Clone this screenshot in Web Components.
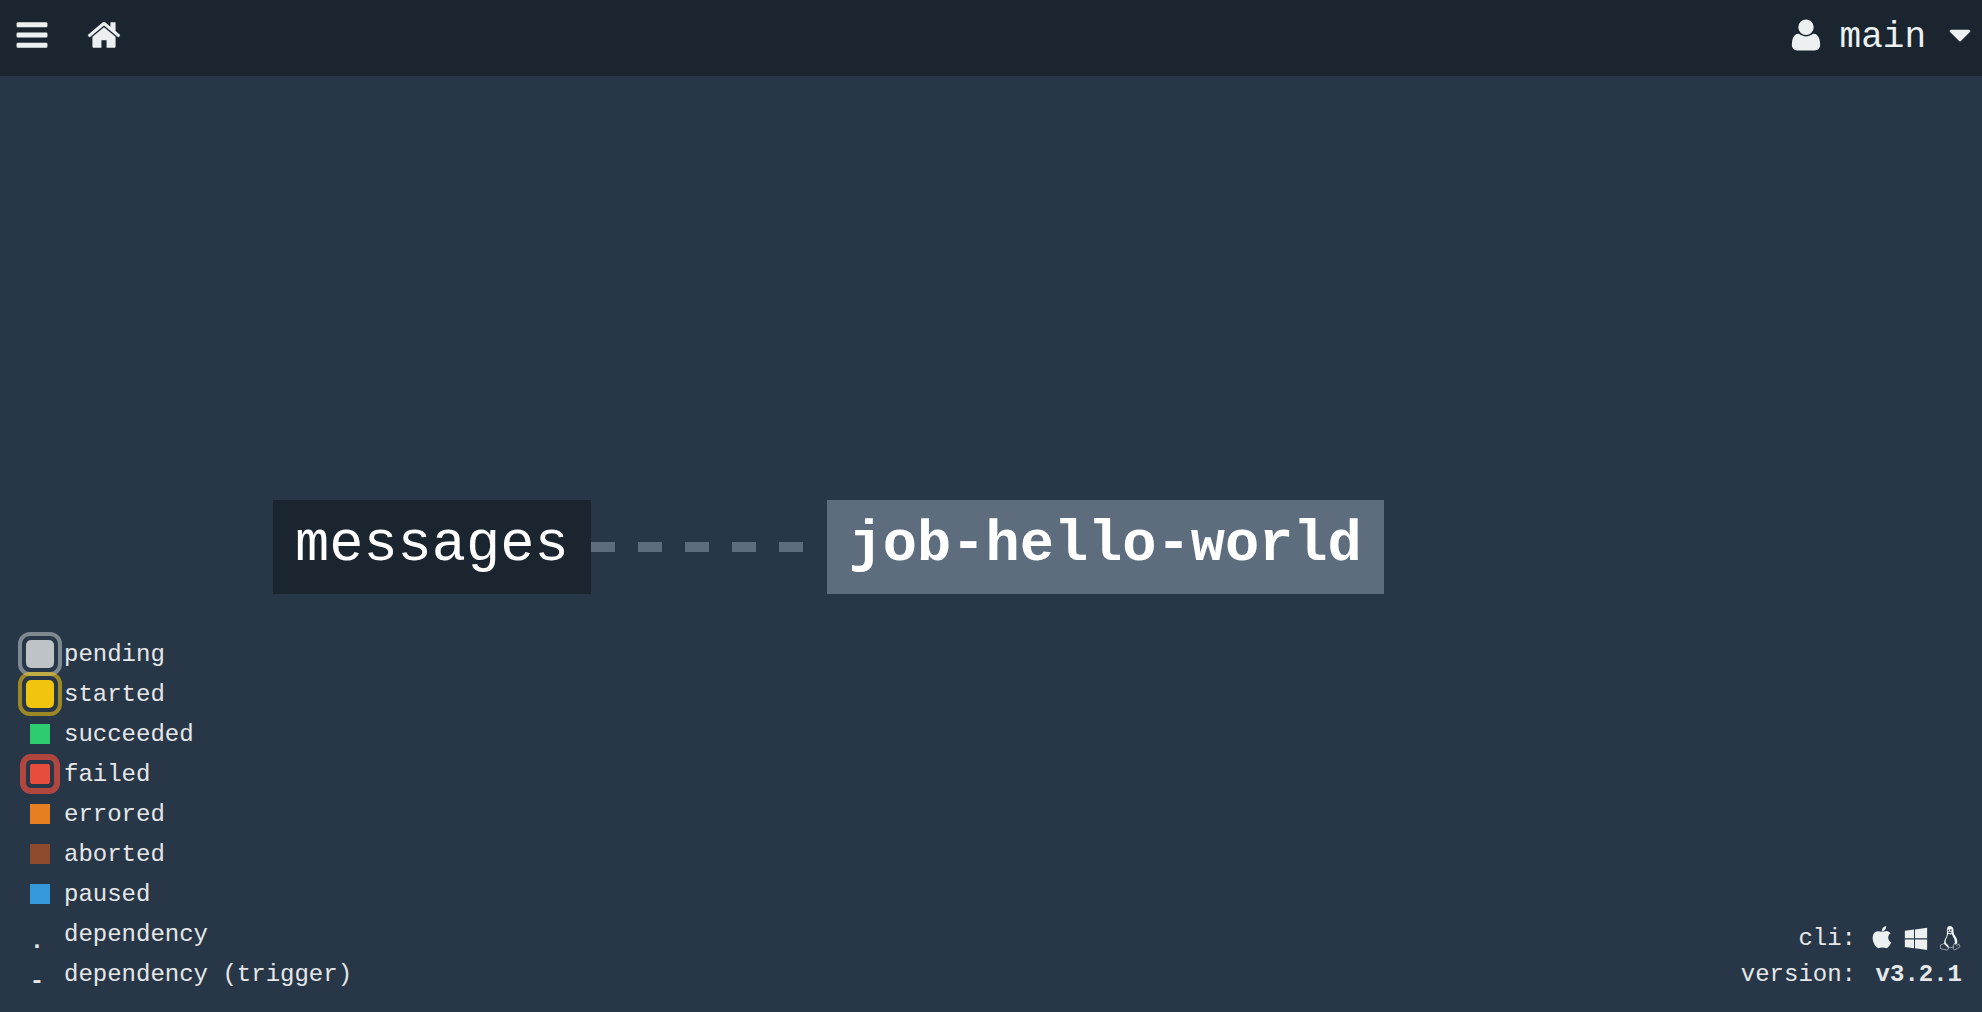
<!DOCTYPE html>
<html lang="en">
<head>
<meta charset="utf-8">
<meta name="viewport" content="width=device-width, initial-scale=1">
<title>Pipeline</title>
<style>
  body { margin: 0; background: #273747; color: #ecf0f1; font: 24px/40px "Liberation Mono", "Courier New", monospace; }
</style>
</head>
<body>
<pipeline-page></pipeline-page>
<script>
const ICONS = {
  bars: '<path d="M1664 1344v128q0 26-19 45t-45 19h-1408q-26 0-45-19t-19-45v-128q0-26 19-45t45-19h1408q26 0 45 19t19 45zm0-512v128q0 26-19 45t-45 19h-1408q-26 0-45-19t-19-45v-128q0-26 19-45t45-19h1408q26 0 45 19t19 45zm0-512v128q0 26-19 45t-45 19h-1408q-26 0-45-19t-19-45v-128q0-26 19-45t45-19h1408q26 0 45 19t19 45z"/>',
  home: '<path d="M1472 992v480q0 26-19 45t-45 19h-384v-384h-256v384h-384q-26 0-45-19t-19-45v-480q0-1 .5-3t.5-3l575-474 575 474q1 2 1 6zm223-69l-62 74q-8 9-21 11h-3q-13 0-21-7l-692-577-692 577q-12 8-24 7-13-2-21-11l-62-74q-8-10-7-23.5t11-21.5l719-599q32-26 76-26t76 26l244 204v-195q0-14 9-23t23-9h192q14 0 23 9t9 23v408l219 182q10 8 11 21.5t-7 23.5z"/>',
  user: '<path d="M1600 1405q0 120-73 189.5t-194 69.5h-874q-121 0-194-69.5t-73-189.5q0-53 3.5-103.5t14-109 26.5-108.5 43-97.5 62-81 85.5-53.5 111.5-20q9 0 42 21.5t74.5 48 108 48 133.5 21.5 133.5-21.5 108-48 74.5-48 42-21.5q61 0 111.5 20t85.5 53.5 62 81 43 97.5 26.5 108.5 14 109 3.5 103.5zm-320-893q0 159-112.5 271.5t-271.5 112.5-271.5-112.5-112.5-271.5 112.5-271.5 271.5-112.5 271.5 112.5 112.5 271.5z"/>',
  caret: '<path d="M1408 704q0 26-19 45l-448 448q-19 19-45 19t-45-19l-448-448q-19-19-19-45t19-45 45-19h896q26 0 45 19t19 45z"/>',
  apple: '<path d="M1585 1215q-39 125-123 250-129 196-257 196-49 0-140-32-86-32-151-32-61 0-142 33-81 34-132 34-152 0-301-259-147-261-147-503 0-228 113-374 113-144 284-144 72 0 177 30 104 30 138 30 45 0 143-34 102-34 173-34 119 0 213 65 52 36 104 100-79 67-114 118-65 94-65 207 0 124 69 223t158 126zm-376-1173q0 61-29 136-30 75-93 138-54 54-108 72-37 11-104 17 3-149 78-257 74-107 250-148 1 3 2.5 11t2.5 11q0 4 .5 10t.5 10z"/>',
  windows: '<path d="M746 1006v651l-682-94v-557h682zm0-743v659h-682v-565zm982 743v786l-907-125v-661h907zm0-878v794h-907v-669z"/>',
  linux: '<path fill-rule="evenodd" d="M880 0C1060 0 1160 130 1160 330C1160 540 1200 620 1300 770C1420 950 1490 1160 1420 1330L1250 1350C1290 1180 1240 980 1120 800L1030 590L930 640L760 580C740 760 620 900 580 1080C550 1200 590 1270 660 1350L790 1480C830 1540 800 1580 740 1590L470 1370C440 1240 460 1080 540 940C640 780 680 660 665 420C650 160 700 0 880 0ZM770 260a45 70 0 1 0 2 0ZM960 250a55 75 0 1 0 2 0ZM720 500L880 540L1050 480L860 430Z"/><path fill="none" stroke="currentColor" stroke-width="55" opacity=".8" d="M740 1590C850 1650 1020 1630 1160 1540M420 1310C360 1390 220 1380 185 1430C160 1500 210 1600 180 1670C260 1750 470 1720 610 1790C750 1810 810 1700 740 1590L530 1330C490 1270 440 1260 420 1310ZM1190 1330C1140 1500 1110 1650 1170 1750C1270 1840 1360 1690 1610 1580C1680 1530 1570 1480 1550 1330C1480 1470 1300 1480 1250 1300Z"/>'
};

class UiIcon extends HTMLElement {
  connectedCallback() {
    this.attachShadow({ mode: "open" }).innerHTML = `
      <style>
        :host { display: block; width: var(--icon-size, 36px); height: var(--icon-size, 36px); }
        svg { display: block; width: 100%; height: 100%; fill: currentColor; overflow: visible; }
      </style>
      <svg viewBox="0 0 1792 1792" aria-hidden="true">${ICONS[this.getAttribute("name")]}</svg>`;
  }
}
customElements.define("ui-icon", UiIcon);

class TopBar extends HTMLElement {
  connectedCallback() {
    this.attachShadow({ mode: "open" }).innerHTML = `
      <style>
        :host { display: flex; justify-content: space-between; height: 76px; background: #1b252f; padding: 0 4px 0 14px; box-sizing: border-box; }
        nav, .user { display: flex; align-items: center; }
        nav { gap: 36px; padding-bottom: 6px; }
        button, a { display: block; margin: 0; padding: 0; border: 0; background: none; color: inherit; font: inherit; cursor: pointer; }
        .user { gap: 16px; font-size: 36px; line-height: 40px; }
        ui-icon { margin-bottom: 6px; }
        nav ui-icon { margin: 0; }
      </style>
      <nav aria-label="Main">
        <button type="button" aria-label="Toggle menu"><ui-icon name="bars"></ui-icon></button>
        <a href="#home" aria-label="Home"><ui-icon name="home"></ui-icon></a>
      </nav>
      <button type="button" class="user">
        <ui-icon name="user"></ui-icon><slot></slot><ui-icon name="caret"></ui-icon>
      </button>`;
  }
}
customElements.define("top-bar", TopBar);

class GraphNode extends HTMLElement {
  connectedCallback() {
    this.attachShadow({ mode: "open" }).innerHTML = `
      <style>
        :host { display: block; background: #1b252f; color: #fff; }
        :host([kind="job"]) { background: #5d6d7e; font-weight: bold; }
        a { display: block; padding: 13px 22px 17px; color: inherit; text-decoration: none; font-size: 57px; line-height: 64px; white-space: nowrap; }
      </style>
      <a href="#${this.getAttribute("kind")}"><slot></slot></a>`;
  }
}
customElements.define("graph-node", GraphNode);

class GraphEdge extends HTMLElement {
  connectedCallback() {
    this.attachShadow({ mode: "open" }).innerHTML = `
      <style>
        :host { display: block; width: 236px; }
        svg { display: block; width: 100%; height: 10px; }
      </style>
      <svg aria-hidden="true"><line x1="0" y1="5" x2="230" y2="5" stroke="#5d6d7e" stroke-width="10" stroke-dasharray="24 23"/></svg>`;
  }
}
customElements.define("graph-edge", GraphEdge);

class LegendItem extends HTMLElement {
  connectedCallback() {
    const symbol = this.getAttribute("symbol") || "";
    this.attachShadow({ mode: "open" }).innerHTML = `
      <style>
        :host { display: flex; align-items: center; gap: 4px; height: 40px; }
        .cell { display: grid; place-items: center; place-content: center; width: 40px; height: 40px; }
        .cell > * { grid-area: 1 / 1; }
        .swatch { width: 20px; height: 20px; background: var(--status); }
        .ring { display: none; box-sizing: border-box; width: 44px; height: 44px; border: 4px solid var(--status); border-radius: 12px; opacity: .58; }
        :host([pulse]) .ring { display: block; }
        :host([pulse="wide"]) .swatch { width: 28px; height: 28px; border-radius: 5px; }
        :host([pulse="near"]) .swatch { border-radius: 2px; }
        :host([pulse="near"]) .ring { width: 40px; height: 40px; border-width: 6px; border-radius: 11px; opacity: .72; }
        .symbol { padding: 16px 6px 0 0; font-weight: bold; }
        .text { padding-top: 2px; }
      </style>
      <span class="cell">${symbol ? `<span class="symbol">${symbol}</span>` : '<span class="swatch"></span><span class="ring"></span>'}</span>
      <span class="text"><slot></slot></span>`;
  }
}
customElements.define("legend-item", LegendItem);

class StatusLegend extends HTMLElement {
  connectedCallback() {
    this.attachShadow({ mode: "open" }).innerHTML = `
      <style>
        :host { display: block; padding: 0 0 18px 20px; color: #e6e7e8; }
      </style>
      <legend-item pulse="wide" style="--status:#bdc3c7">pending</legend-item>
      <legend-item pulse="wide" style="--status:#f1c40f">started</legend-item>
      <legend-item style="--status:#2ecc71">succeeded</legend-item>
      <legend-item pulse="near" style="--status:#e74c3c">failed</legend-item>
      <legend-item style="--status:#e67e22">errored</legend-item>
      <legend-item style="--status:#8f4b2d">aborted</legend-item>
      <legend-item style="--status:#3498db">paused</legend-item>
      <legend-item symbol=".">dependency</legend-item>
      <legend-item symbol="-">dependency (trigger)</legend-item>`;
  }
}
customElements.define("status-legend", StatusLegend);

class CliInfo extends HTMLElement {
  connectedCallback() {
    this.attachShadow({ mode: "open" }).innerHTML = `
      <style>
        :host { display: grid; grid-template-columns: auto auto; justify-items: end; align-items: center; column-gap: 14px; line-height: 36px; padding: 0 20px 19px 0; color: #e6e7e8; }
        .links { display: flex; gap: 10px; padding-bottom: 3px; color: #ecf0f1; --icon-size: 24px; }
        a { color: inherit; }
      </style>
      <span>cli:</span>
      <span class="links">
        <a href="#darwin" aria-label="Download for macOS"><ui-icon name="apple"></ui-icon></a>
        <a href="#windows" aria-label="Download for Windows"><ui-icon name="windows"></ui-icon></a>
        <a href="#linux" aria-label="Download for Linux"><ui-icon name="linux"></ui-icon></a>
      </span>
      <span>version:</span>
      <strong><slot></slot></strong>`;
  }
}
customElements.define("cli-info", CliInfo);

class PipelinePage extends HTMLElement {
  connectedCallback() {
    this.attachShadow({ mode: "open" }).innerHTML = `
      <style>
        :host { display: flex; flex-direction: column; min-height: 100vh; }
        main { flex: 1; display: grid; grid-template-columns: 1fr; }
        main > * { grid-area: 1 / 1; }
        .graph { display: flex; align-items: center; align-self: center; padding: 6px 0 0 273px; }
        status-legend { align-self: end; justify-self: start; }
        cli-info { align-self: end; justify-self: end; }
      </style>
      <top-bar>main</top-bar>
      <main>
        <div class="graph">
          <graph-node kind="resource">messages</graph-node>
          <graph-edge></graph-edge>
          <graph-node kind="job">job-hello-world</graph-node>
        </div>
        <status-legend></status-legend>
        <cli-info>v3.2.1</cli-info>
      </main>`;
  }
}
customElements.define("pipeline-page", PipelinePage);
</script>
</body>
</html>
